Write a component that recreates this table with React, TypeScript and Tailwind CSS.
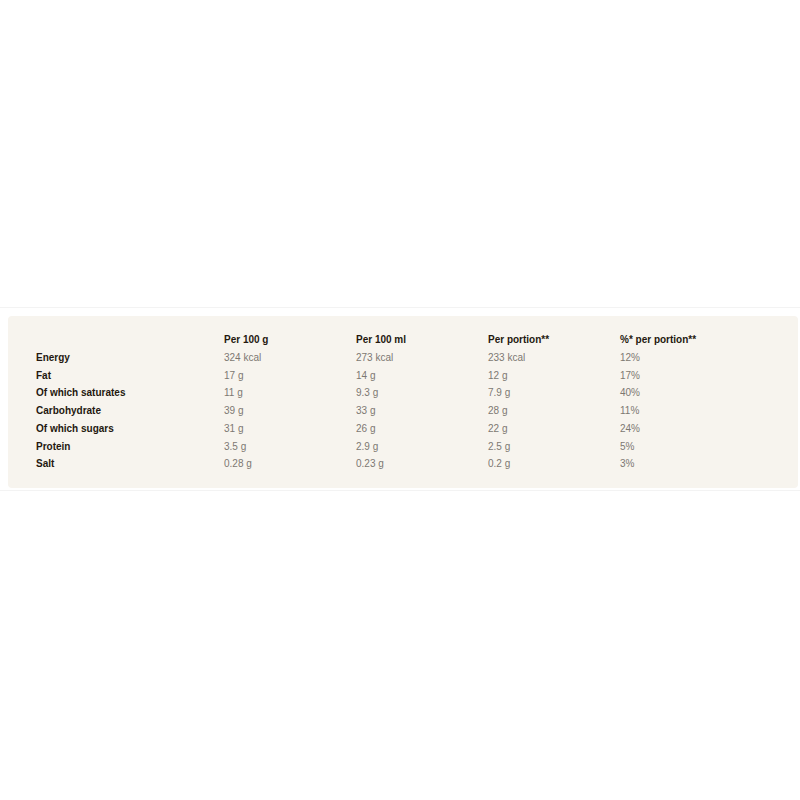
const headers = ['Per 100 g', 'Per 100 ml', 'Per portion**', '%* per portion**'];

const rows: [string, string, string, string, string][] = [
  ['Energy', '324 kcal', '273 kcal', '233 kcal', '12%'],
  ['Fat', '17 g', '14 g', '12 g', '17%'],
  ['Of which saturates', '11 g', '9.3 g', '7.9 g', '40%'],
  ['Carbohydrate', '39 g', '33 g', '28 g', '11%'],
  ['Of which sugars', '31 g', '26 g', '22 g', '24%'],
  ['Protein', '3.5 g', '2.9 g', '2.5 g', '5%'],
  ['Salt', '0.28 g', '0.23 g', '0.2 g', '3%'],
];

export default function App() {
  return (
    <div className="min-h-[800px] bg-white pt-[307px] font-['Liberation_Sans',Arial,sans-serif] text-[10px]">
      <div className="border-y border-[#f3f3f3] pl-2 pr-[2px] pt-2 pb-[2px]">
        <div className="rounded-sm bg-[#f7f4ee] pl-[28px] pt-[15px] pb-[15px]">
          <div className="grid grid-cols-[188px_132px_132px_132px_132px]">
            <div className="h-[17.75px]" />
            {headers.map((h) => (
              <div key={h} className="h-[17.75px] leading-[17.75px] font-bold text-[#24180f]">
                {h}
              </div>
            ))}
            {rows.map((r) => (
              <div key={r[0]} className="contents">
                <div className="h-[17.75px] leading-[17.75px] font-bold text-[#24180f]">{r[0]}</div>
                {r.slice(1).map((v, i) => (
                  <div key={i} className="h-[17.75px] leading-[17.75px] text-[#7d7872]">
                    {v}
                  </div>
                ))}
              </div>
            ))}
          </div>
        </div>
      </div>
    </div>
  );
}
